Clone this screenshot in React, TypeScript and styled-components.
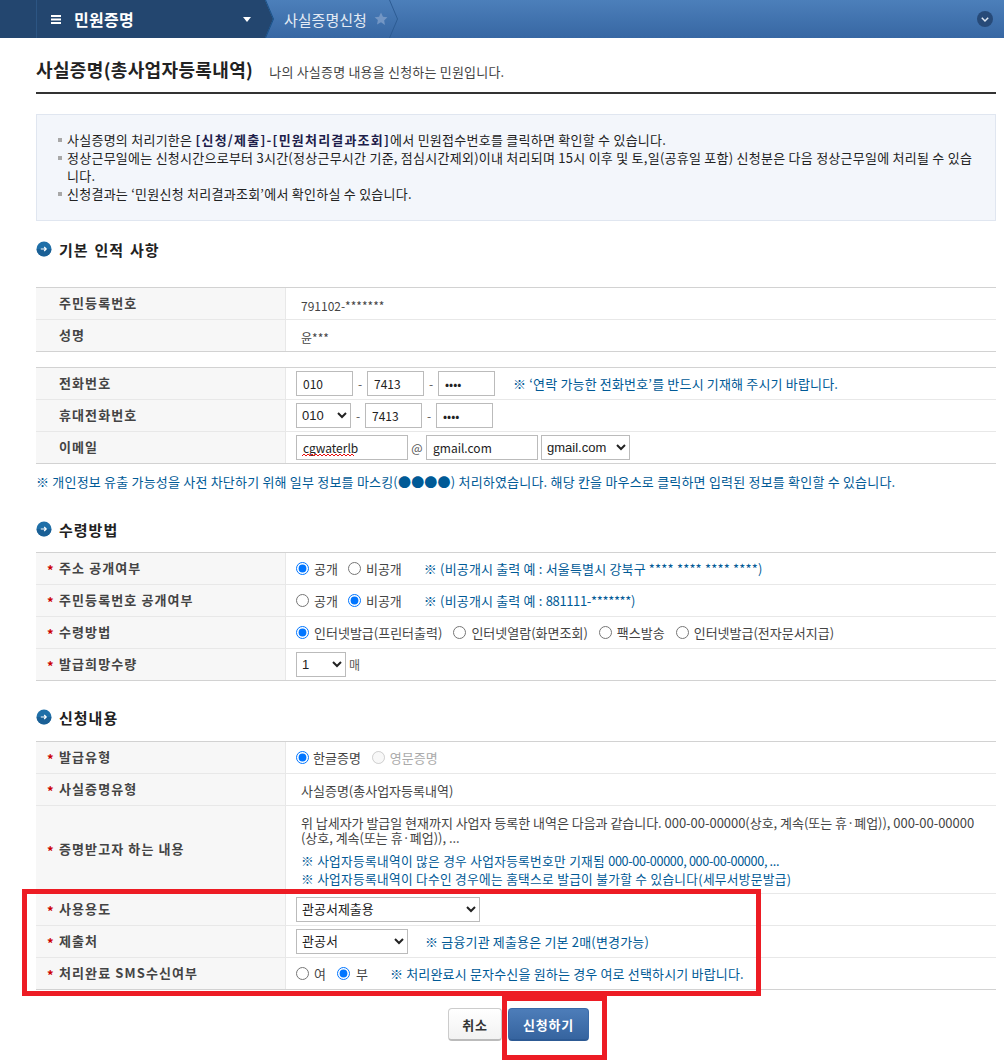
import React from 'react';
import styled, { createGlobalStyle } from 'styled-components';

const GlobalStyle = createGlobalStyle`
  html, body {
    margin: 0;
    padding: 0;
    background: #fff;
    font-family: "Noto Sans CJK KR", "Liberation Sans", sans-serif;
    font-size: 13px;
    color: #333;
  }
`;

const Page = styled.div`
  position: relative;
  width: 1004px;
  height: 1064px;
  overflow: hidden;
`;

const NavBar = styled.nav`
  display: flex;
  align-items: stretch;
  height: 38px;
  background: linear-gradient(#4c7fba, #3767a3);
`;

const NavMenu = styled.div`
  display: flex;
  align-items: center;
  width: 229px;
  padding-left: 36px;
  background: #23466f;
  color: #fff;
`;

const NavMenuInner = styled.div`
  display: flex;
  align-items: center;
  width: 100%;
  height: 100%;
  padding-left: 14px;
  box-sizing: border-box;
  border-left: 1px solid #2c5583;
`;

const NavTitle = styled.span`
  margin-left: 13px;
  flex: 1;
  font-size: 16px;
  font-weight: 700;
  letter-spacing: 0.3px;
  line-height: 38px;
`;

const NavSub = styled.div`
  display: flex;
  align-items: center;
  width: 105px;
  padding-left: 10px;
  color: #e4ebf4;
  font-size: 15px;
`;

const Spacer = styled.div`
  flex: 1;
`;

const NavToggle = styled.div`
  display: flex;
  align-items: center;
  padding-right: 11px;
`;

const Main = styled.main`
  padding: 0 8px 0 36px;
`;

const TitleRow = styled.div`
  display: flex;
  align-items: baseline;
  height: 56px;
  box-sizing: border-box;
  padding-top: 19px;
  border-bottom: 2px solid #333;
`;

const Title = styled.h1`
  margin: 0;
  font-size: 18px;
  font-weight: 700;
  letter-spacing: 0.35px;
  line-height: 24px;
  color: #222;
`;

const TitleDesc = styled.span`
  margin-left: 16px;
  font-size: 13px;
  letter-spacing: 0.2px;
  color: #444;
`;

const Notice = styled.ul`
  margin: 20px 0 0;
  padding: 16px 10px 16px 30px;
  height: 107px;
  box-sizing: border-box;
  list-style: none;
  background: #f3f6fb;
  border: 1px solid #e0e6f0;
  font-size: 13px;
  letter-spacing: 0.25px;
  line-height: 18px;
  color: #222;
`;

const NoticeItem = styled.li`
  position: relative;

  &::before {
    content: '';
    position: absolute;
    left: -9px;
    top: 7px;
    width: 4px;
    height: 4px;
    background: #a8a8a8;
  }
`;

const Strong = styled.strong`
  color: #1d1d4a;
  font-weight: 700;
  letter-spacing: 1.2px;
`;

const SectionHead = styled.h2<{ $top: number; $bottom: number }>`
  display: flex;
  align-items: center;
  gap: 7px;
  margin: ${(p) => p.$top}px 0 ${(p) => p.$bottom}px;
  height: 20px;
  font-size: 15px;
  font-weight: 700;
  letter-spacing: 1px;
  word-spacing: 1.5px;
  color: #222;
`;

const Table = styled.div<{ $top?: number }>`
  margin-top: ${(p) => p.$top ?? 0}px;
  border-top: 1px solid #d2d2d2;
  border-bottom: 1px solid #d2d2d2;

  & > div:last-child {
    border-bottom: 0;
  }
`;

const Row = styled.div<{ $height?: number }>`
  display: flex;
  height: ${(p) => p.$height ?? 31}px;
  border-bottom: 1px solid #e8e8e8;
`;

const Label = styled.div`
  position: relative;
  display: flex;
  align-items: center;
  width: 250px;
  padding-left: 23px;
  padding-bottom: 2px;
  box-sizing: border-box;
  flex: none;
  background: #f7f7f7;
  border-right: 1px solid #e8e8e8;
  font-size: 13px;
  font-weight: 700;
  letter-spacing: 1.1px;
  color: #444;
`;

const Star = styled.span`
  position: absolute;
  left: 11px;
  top: calc(50% - 6px);
  color: #cc0000;
  font-size: 13px;
  font-weight: 700;
  line-height: 13px;
`;

const Cell = styled.div<{ $indent?: number; $size?: number; $drop?: number }>`
  display: flex;
  align-items: center;
  flex: 1;
  padding-left: ${(p) => p.$indent ?? 10}px;
  padding-top: ${(p) => p.$drop ?? 0}px;
  font-size: ${(p) => p.$size ?? 13}px;
  color: #444;
`;

const TextInput = styled.input<{ $width: number }>`
  width: ${(p) => p.$width}px;
  height: 25px;
  box-sizing: border-box;
  padding: 0 6px;
  border: 1px solid #bbb;
  border-radius: 0;
  background: #fff;
  font-family: "Noto Sans CJK KR", sans-serif;
  font-size: 12px;
  color: #222;
`;

const SpellField = styled.span`
  position: relative;
  display: inline-flex;
`;

const Squiggle = styled.svg`
  position: absolute;
  left: 6px;
  top: 18px;
`;

const Select = styled.select<{ $width: number }>`
  width: ${(p) => p.$width}px;
  height: 25px;
  box-sizing: border-box;
  padding: 0 0 0 1px;
  border: 1px solid #bbb;
  border-radius: 0;
  background: #fff;
  font-family: "Liberation Sans", "Noto Sans CJK KR", sans-serif;
  font-size: 13px;
  color: #222;
`;

const Sep = styled.span<{ $width: number }>`
  width: ${(p) => p.$width}px;
  text-align: center;
  font-size: 12px;
  color: #555;
`;

const Hint = styled.span<{ $left: number }>`
  margin-left: ${(p) => p.$left}px;
  font-size: 13px;
  letter-spacing: 0.17px;
  color: #005a96;
  white-space: nowrap;
`;

const Digits = styled.span`
  letter-spacing: -0.35px;
`;

const RadioLabel = styled.label<{ $gap: number; $end: number; $muted?: boolean }>`
  display: inline-flex;
  align-items: center;
  margin-right: ${(p) => p.$end}px;
  font-size: 13px;
  color: ${(p) => (p.$muted ? '#aaa' : '#444')};
  white-space: nowrap;

  input {
    width: 13px;
    height: 13px;
    margin: 0 ${(p) => p.$gap}px 0 0;
  }
`;

const MaskNote = styled.p`
  margin: 9px 0 0;
  font-size: 13px;
  letter-spacing: 0.2px;
  line-height: 18px;
  color: #005a96;
  white-space: nowrap;
`;

const Content = styled.div`
  padding: 3px 0 0 5px;
  font-size: 13px;
  letter-spacing: -0.03px;
  line-height: 15px;
  color: #444;
`;

const ContentNote = styled.div`
  margin-top: 7px;
  font-size: 12.7px;
  letter-spacing: 0.3px;
  line-height: 18px;
  color: #005a96;
`;

const Actions = styled.div`
  display: flex;
  justify-content: center;
  gap: 6px;
  margin: 18px 0 0;
  padding-left: 5px;
`;

const Button = styled.button<{ $primary?: boolean; $width: number }>`
  width: ${(p) => p.$width}px;
  height: 33px;
  padding: 0;
  border-radius: 4px;
  border: 1px solid ${(p) => (p.$primary ? '#3a6aa8' : '#ccc')};
  border-bottom: 2px solid ${(p) => (p.$primary ? '#2d5a94' : '#bbb')};
  background: ${(p) =>
    p.$primary ? 'linear-gradient(#4d7db9, #36649f)' : 'linear-gradient(#fff, #f2f2f2)'};
  color: ${(p) => (p.$primary ? '#fff' : '#333')};
  font-family: "Noto Sans CJK KR", sans-serif;
  font-size: 13px;
  font-weight: 700;
  letter-spacing: 0.8px;
`;

// the red marks are drawn on top of the form
const RedMark = styled.div<{ $l: number; $t: number; $w: number; $h: number }>`
  position: absolute;
  left: ${(p) => p.$l}px;
  top: ${(p) => p.$t}px;
  width: ${(p) => p.$w}px;
  height: ${(p) => p.$h}px;
  box-sizing: border-box;
  border: 5px solid #ed1c24;
  pointer-events: none;
`;

const Chevron = ({ fill, stroke }: { fill: string; stroke: string }) => (
  <svg width="9" height="38" viewBox="0 0 9 38" style={{ flex: 'none' }}>
    <polygon points="0,0 8,19 0,38" fill={fill} />
    <polyline points="0.5,0 8.5,19 0.5,38" fill="none" stroke={stroke} strokeWidth="1" />
  </svg>
);

const SectionIcon = () => (
  <svg width="16" height="16" viewBox="0 0 16 16">
    <circle cx="8" cy="8" r="7.5" fill="#1f6fa8" />
    <path d="M0.5 8a7.5 7.5 0 0 0 15 0" fill="#17578a" opacity="0.6" />
    <path d="M4.800 8h5.400M8.200 6l2 2-2 2" fill="none" stroke="#fff" strokeWidth="1.200" />
  </svg>
);

const Req = () => <Star>*</Star>;

const Radio = ({
  text,
  checked,
  gap = 5,
  end = 11,
  disabled,
}: {
  text: string;
  checked?: boolean;
  gap?: number;
  end?: number;
  disabled?: boolean;
}) => (
  <RadioLabel $gap={gap} $end={end} $muted={disabled}>
    <input type="radio" defaultChecked={checked} disabled={disabled} />
    {text}
  </RadioLabel>
);

function App() {
  return (
    <Page>
      <GlobalStyle />
      <NavBar>
        <NavMenu>
          <NavMenuInner>
            <svg width="10" height="9" viewBox="0 0 10 9">
              <path d="M0 0h10v2H0zM0 3.500h10v2H0zM0 7h10v2H0z" fill="#fff" />
            </svg>
            <NavTitle>민원증명</NavTitle>
            <svg width="8" height="5" viewBox="0 0 8 5" style={{ marginRight: 14 }}>
              <path d="M0 0h8L4 5z" fill="#fff" />
            </svg>
          </NavMenuInner>
        </NavMenu>
        <Chevron fill="#23466f" stroke="#1a5288" />
        <NavSub>
          사실증명신청
          <svg width="14" height="14" viewBox="0 0 24 24" style={{ marginLeft: 7, flex: 'none' }}>
            <path d="M12 1l3.400 7.200 7.600 1-5.600 5.400 1.400 7.800L12 17.700 5.200 21.400l1.400-7.800L1 9.200l7.600-1z" fill="#7396c4" />
          </svg>
        </NavSub>
        <Chevron fill="transparent" stroke="#2d5c93" />
        <Spacer />
        <NavToggle>
          <svg width="16" height="16" viewBox="0 0 16 16">
            <circle cx="8" cy="8" r="8" fill="#274a78" />
            <path d="M4.800 6.800L8 10l3.200-3.200" fill="none" stroke="#dfe8f2" strokeWidth="1.500" />
          </svg>
        </NavToggle>
      </NavBar>

      <Main>
        <TitleRow>
          <Title>사실증명(총사업자등록내역)</Title>
          <TitleDesc>나의 사실증명 내용을 신청하는 민원입니다.</TitleDesc>
        </TitleRow>

        <Notice>
          <NoticeItem>
            사실증명의 처리기한은 <Strong>[신청/제출]-[민원처리결과조회]</Strong>에서 민원접수번호를 클릭하면 확인할 수 있습니다.
          </NoticeItem>
          <NoticeItem>
            정상근무일에는 신청시간으로부터 3시간(정상근무시간 기준, 점심시간제외)이내 처리되며 15시 이후 및 토,일(공휴일 포함) 신청분은 다음 정상근무일에 처리될 수 있습
            <br />
            니다.
          </NoticeItem>
          <NoticeItem>신청결과는 ‘민원신청 처리결과조회’에서 확인하실 수 있습니다.</NoticeItem>
        </Notice>

        <SectionHead $top={18} $bottom={28}>
          <SectionIcon />
          기본 인적 사항
        </SectionHead>

        <Table>
          <Row>
            <Label>주민등록번호</Label>
            <Cell $indent={15} $size={12} $drop={3}>791102-*******</Cell>
          </Row>
          <Row>
            <Label>성명</Label>
            <Cell $indent={15} $size={12} $drop={3}>윤***</Cell>
          </Row>
        </Table>

        <Table $top={15}>
          <Row>
            <Label>전화번호</Label>
            <Cell>
              <TextInput $width={57} defaultValue="010" />
              <Sep $width={14}>-</Sep>
              <TextInput $width={57} defaultValue="7413" />
              <Sep $width={14}>-</Sep>
              <TextInput $width={57} type="password" defaultValue="1234" />
              <Hint $left={18}>※ ‘연락 가능한 전화번호’를 반드시 기재해 주시기 바랍니다.</Hint>
            </Cell>
          </Row>
          <Row>
            <Label>휴대전화번호</Label>
            <Cell>
              <Select $width={55} defaultValue="010">
                <option>010</option>
              </Select>
              <Sep $width={14}>-</Sep>
              <TextInput $width={57} defaultValue="7413" />
              <Sep $width={14}>-</Sep>
              <TextInput $width={57} type="password" defaultValue="1234" />
            </Cell>
          </Row>
          <Row>
            <Label>이메일</Label>
            <Cell>
              <SpellField>
                <TextInput $width={112} defaultValue="cgwaterlb" />
                <Squiggle width="55" height="4" viewBox="0 0 55 4">
                  <path
                    d="M0 3l2-2 2 2 2-2 2 2 2-2 2 2 2-2 2 2 2-2 2 2 2-2 2 2 2-2 2 2 2-2 2 2 2-2 2 2 2-2 2 2 2-2 2 2 2-2 2 2 2-2 2 2"
                    fill="none"
                    stroke="#e81010"
                    strokeWidth="1"
                  />
                </Squiggle>
              </SpellField>
              <Sep $width={18}>@</Sep>
              <TextInput $width={112} defaultValue="gmail.com" />
              <Sep $width={3} />
              <Select $width={89} defaultValue="gmail.com">
                <option>gmail.com</option>
              </Select>
            </Cell>
          </Row>
        </Table>

        <MaskNote>
          ※ 개인정보 유출 가능성을 사전 차단하기 위해 일부 정보를 마스킹(●●●●) 처리하였습니다. 해당 칸을 마우스로 클릭하면 입력된 정보를 확인할 수 있습니다.
        </MaskNote>

        <SectionHead $top={28} $bottom={13}>
          <SectionIcon />
          수령방법
        </SectionHead>

        <Table>
          <Row>
            <Label>
              <Req />주소 공개여부
            </Label>
            <Cell>
              <Radio text="공개" checked end={10} />
              <Radio text="비공개" end={10} />
              <Hint $left={12}>※ (비공개시 출력 예 : 서울특별시 강북구 **** **** **** ****)</Hint>
            </Cell>
          </Row>
          <Row>
            <Label>
              <Req />주민등록번호 공개여부
            </Label>
            <Cell>
              <Radio text="공개" end={10} />
              <Radio text="비공개" checked end={10} />
              <Hint $left={12}>
                ※ (비공개시 출력 예 : <Digits>881111-*******</Digits>)
              </Hint>
            </Cell>
          </Row>
          <Row>
            <Label>
              <Req />수령방법
            </Label>
            <Cell>
              <Radio text="인터넷발급(프린터출력)" checked />
              <Radio text="인터넷열람(화면조회)" />
              <Radio text="팩스발송" />
              <Radio text="인터넷발급(전자문서지급)" />
            </Cell>
          </Row>
          <Row>
            <Label>
              <Req />발급희망수량
            </Label>
            <Cell>
              <Select $width={50} defaultValue="1">
                <option>1</option>
              </Select>
              <Sep $width={17}>매</Sep>
            </Cell>
          </Row>
        </Table>

        <SectionHead $top={26} $bottom={14}>
          <SectionIcon />
          신청내용
        </SectionHead>

        <Table>
          <Row>
            <Label>
              <Req />발급유형
            </Label>
            <Cell>
              <Radio text="한글증명" checked gap={4} />
              <Radio text="영문증명" disabled />
            </Cell>
          </Row>
          <Row>
            <Label>
              <Req />사실증명유형
            </Label>
            <Cell $indent={15} $drop={2}>사실증명(총사업자등록내역)</Cell>
          </Row>
          <Row $height={87}>
            <Label>
              <Req />증명받고자 하는 내용
            </Label>
            <Cell>
              <Content>
                위 납세자가 발급일 현재까지 사업자 등록한 내역은 다음과 같습니다. 000-00-00000(상호, 계속(또는 휴·폐업)), 000-00-00000
                <br />
                (상호, 계속(또는 휴·폐업)), ...
                <ContentNote>
                  ※ 사업자등록내역이 많은 경우 사업자등록번호만 기재됨 <Digits>000-00-00000, 000-00-00000, ...</Digits>
                  <br />※ 사업자등록내역이 다수인 경우에는 홈택스로 발급이 불가할 수 있습니다(세무서방문발급)
                </ContentNote>
              </Content>
            </Cell>
          </Row>
          <Row>
            <Label>
              <Req />사용용도
            </Label>
            <Cell>
              <Select $width={184} defaultValue="관공서제출용">
                <option>관공서제출용</option>
              </Select>
            </Cell>
          </Row>
          <Row>
            <Label>
              <Req />제출처
            </Label>
            <Cell>
              <Select $width={112} defaultValue="관공서">
                <option>관공서</option>
              </Select>
              <Hint $left={17}>※ 금융기관 제출용은 기본 2매(변경가능)</Hint>
            </Cell>
          </Row>
          <Row>
            <Label>
              <Req />처리완료 SMS수신여부
            </Label>
            <Cell>
              <Radio text="여" />
              <Radio text="부" checked gap={6} />
              <Hint $left={11}>※ 처리완료시 문자수신을 원하는 경우 여로 선택하시기 바랍니다.</Hint>
            </Cell>
          </Row>
        </Table>

        <Actions>
          <Button $width={54}>취소</Button>
          <Button $primary $width={81}>신청하기</Button>
        </Actions>
      </Main>

      <RedMark $l={22} $t={889} $w={739} $h={107} />
      <RedMark $l={502} $t={996} $w={105} $h={64} />
    </Page>
  );
}

export default App;
